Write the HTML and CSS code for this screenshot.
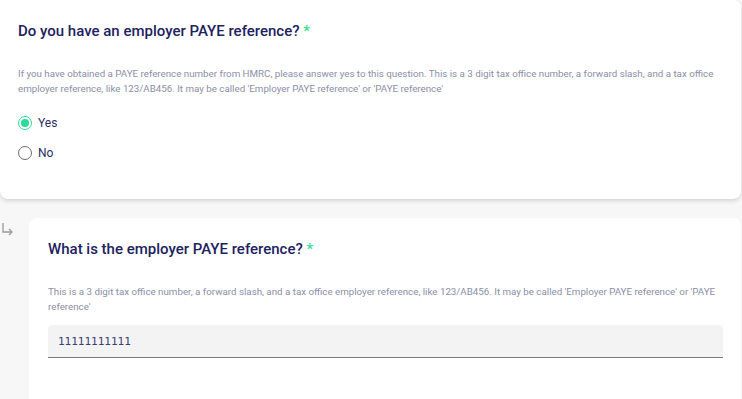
FILE: index.html
```html
<!DOCTYPE html>
<html lang="en">
<head>
    <meta charset="UTF-8" />
    <meta name="viewport" content="width=device-width, initial-scale=1" />
    <title>PAYE reference</title>
    <link rel="stylesheet" href="styles.css">
</head>
<body>

    <section class="question">
        <h2>Do you have an employer PAYE reference? <span class="req">*</span></h2>
        <p class="hint">If you have obtained a PAYE reference number from HMRC, please answer yes to this question. This is a 3 digit tax office number, a forward slash, and a tax office employer reference, like 123/AB456. It may be called 'Employer PAYE reference' or 'PAYE reference'</p>
        <div class="options">
            <label class="option">
                <span class="radio checked"></span>
                Yes
            </label>
            <label class="option">
                <span class="radio"></span>
                No
            </label>
        </div>
    </section>

    <div class="followup">
        <div class="branch">
            <svg width="14" height="14" viewBox="0 0 14 14" fill="none" stroke="#9a9a9a" stroke-width="1.3">
                <path d="M3 1 V10 H12" />
                <path d="M9 7 L12 10 L9 13" />
            </svg>
        </div>
        <section class="question sub">
            <h2>What is the employer PAYE reference? <span class="req">*</span></h2>
            <p class="hint">This is a 3 digit tax office number, a forward slash, and a tax office employer reference, like 123/AB456. It may be called 'Employer PAYE reference' or 'PAYE reference'</p>
            <div class="field">11111111111</div>
        </section>
    </div>

</body>
</html>
```

FILE: styles.css
```css
* {
    box-sizing: border-box;
    margin: 0;
    padding: 0;
}

body {
    font-family: Roboto, 'Liberation Sans', sans-serif;
    background-color: #f7f7f7;
    color: #1b1f5c;
    width: 742px;
}

.question {
    background: #fff;
    width: 741px;
    padding: 21px 18px 38px;
    border-radius: 0 8px 8px 8px;
    box-shadow: 0 2px 4px rgba(0, 0, 0, 0.14);
}

    .question h2 {
        font-size: 15px;
        font-weight: 500;
        line-height: 20px;
        color: #1d2260;
    }

.req {
    color: #3ddc97;
    font-size: 15px;
}

.hint {
    margin-top: 25px;
    font-size: 9.75px;
    line-height: 15px;
    color: #8a8ea6;
}

.options {
    margin-top: 19px;
    display: flex;
    flex-direction: column;
    gap: 14px;
}

.option {
    display: flex;
    align-items: center;
    gap: 6px;
    font-size: 12px;
    line-height: 16px;
    color: #2b2f66;
}

.radio {
    width: 14px;
    height: 14px;
    border: 1.4px solid #6e6e6e;
    border-radius: 50%;
    position: relative;
}

    .radio.checked {
        border-color: #2fd99a;
    }

        .radio.checked::after {
            content: '';
            position: absolute;
            inset: 2.3px;
            border-radius: 50%;
            background: #2fd99a;
        }

.followup {
    display: flex;
    margin-top: 19px;
}

.branch {
    width: 29px;
    padding-top: 3px;
}

.question.sub {
    width: 712px;
    border-radius: 8px;
    padding: 21px 18px 50px 19px;
    box-shadow: none;
}

    .question.sub .hint {
        margin-top: 25px;
    }

.field {
    margin-top: 11px;
    height: 33px;
    background: #f3f3f3;
    border-radius: 4px 4px 0 0;
    border-bottom: 1px solid #7a7a7a;
    padding: 0 10px;
    display: flex;
    align-items: center;
    font-family: 'DejaVu Sans Mono', monospace;
    font-size: 11px;
    color: #3a3e70;
}
```
